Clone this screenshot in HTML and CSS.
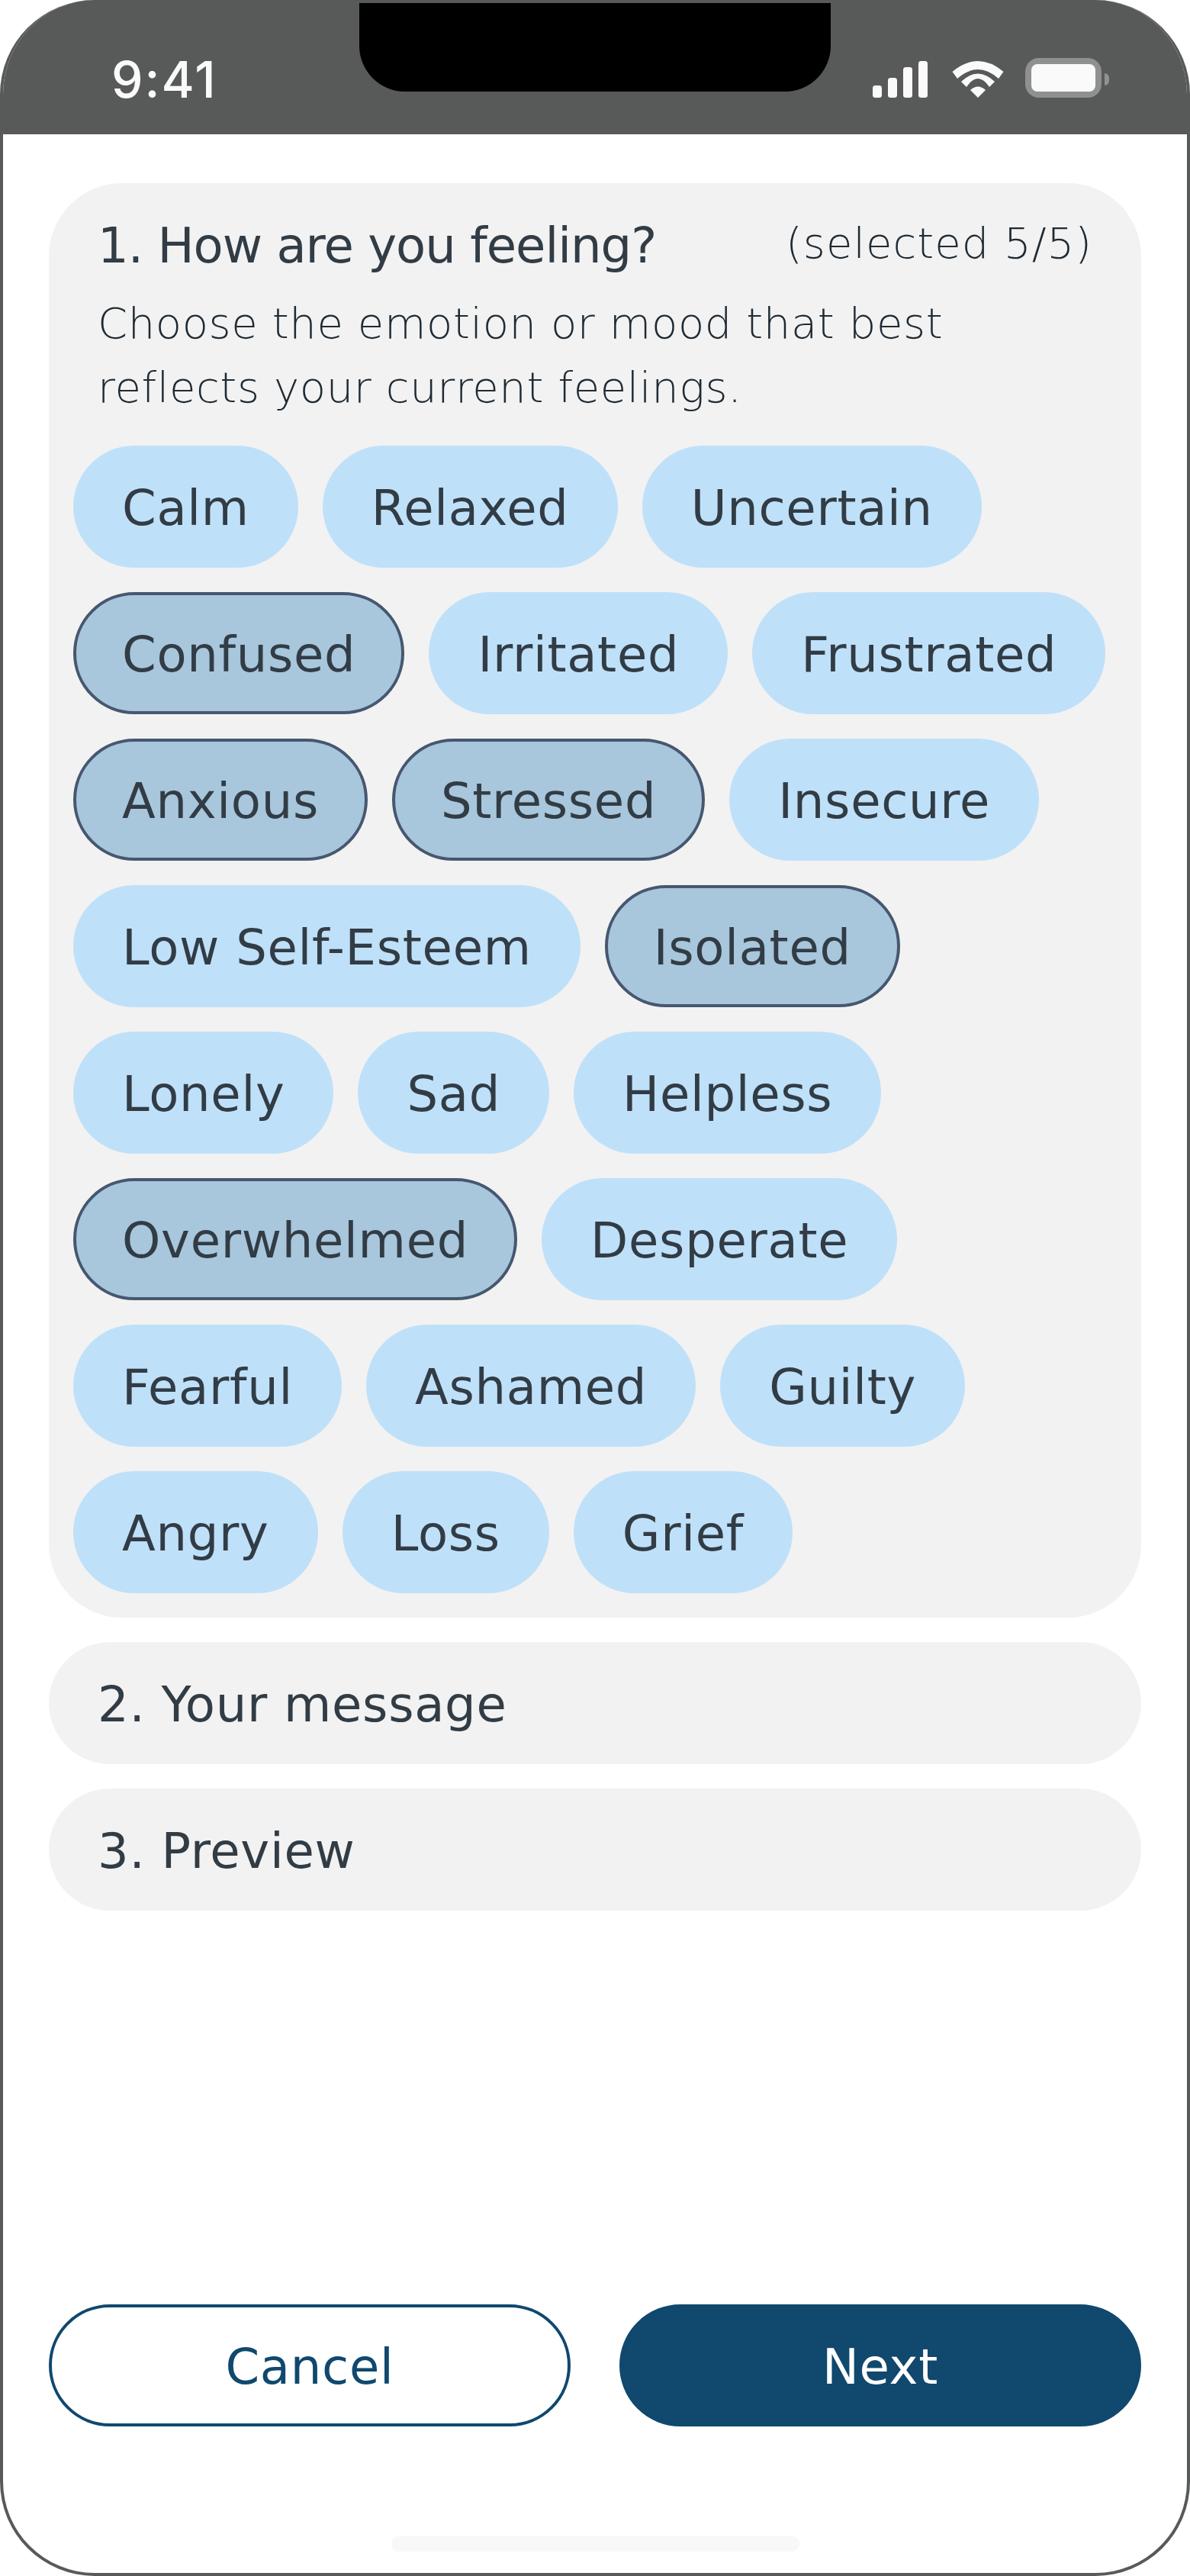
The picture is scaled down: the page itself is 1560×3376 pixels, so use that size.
FILE: index.html
```html
<!DOCTYPE html>
<html lang="en">
<head>
    <meta charset="UTF-8">
    <meta name="viewport" content="width=device-width, initial-scale=1.0">
    <title>How are you feeling</title>
    <link rel="stylesheet" href="styles.css">
</head>
<body>
    <div class="phone">
        <div class="status">
            <div class="time">9:41</div>
            <div class="notch"></div>
            <div class="status-icons">
                <svg class="signal" width="72" height="48" viewBox="0 0 72 48">
                    <rect x="0" y="32" width="12" height="16" rx="3.5"/>
                    <rect x="20" y="22" width="12" height="26" rx="3.5"/>
                    <rect x="40" y="8" width="12" height="40" rx="3.5"/>
                    <rect x="60" y="0" width="12" height="48" rx="3.5"/>
                </svg>
                <svg class="wifi" width="68" height="48" viewBox="0 0 68 48">
                    <path d="M0.5 14 Q34 -14 67.5 14 L61 23 Q34 -1 7 23Z"/>
                    <path d="M12 27 Q34 6 56 27 L49 34 Q34 12 19 34Z"/>
                    <path d="M24 38 Q34 29 44 38 L34 48Z"/>
                </svg>
                <div class="battery"><div class="battery-fill"></div></div>
                <div class="battery-nub"></div>
            </div>
        </div>

        <div class="content">
            <div class="section open">
                <div class="section-head">
                    <span class="section-title">1. How are you feeling?</span>
                    <span class="count">(selected 5/5)</span>
                </div>
                <p class="desc">Choose the emotion or mood that best<br>reflects your current feelings.</p>
                <div class="chips">
                    <div class="chip-row">
                        <span class="chip">Calm</span>
                        <span class="chip">Relaxed</span>
                        <span class="chip">Uncertain</span>
                    </div>
                    <div class="chip-row">
                        <span class="chip selected">Confused</span>
                        <span class="chip">Irritated</span>
                        <span class="chip">Frustrated</span>
                    </div>
                    <div class="chip-row">
                        <span class="chip selected">Anxious</span>
                        <span class="chip selected">Stressed</span>
                        <span class="chip">Insecure</span>
                    </div>
                    <div class="chip-row">
                        <span class="chip">Low Self-Esteem</span>
                        <span class="chip selected">Isolated</span>
                    </div>
                    <div class="chip-row">
                        <span class="chip">Lonely</span>
                        <span class="chip">Sad</span>
                        <span class="chip">Helpless</span>
                    </div>
                    <div class="chip-row">
                        <span class="chip selected">Overwhelmed</span>
                        <span class="chip">Desperate</span>
                    </div>
                    <div class="chip-row">
                        <span class="chip">Fearful</span>
                        <span class="chip">Ashamed</span>
                        <span class="chip">Guilty</span>
                    </div>
                    <div class="chip-row">
                        <span class="chip">Angry</span>
                        <span class="chip">Loss</span>
                        <span class="chip">Grief</span>
                    </div>
                </div>
            </div>
            <div class="section closed"><span class="section-title">2. Your message</span></div>
            <div class="section closed"><span class="section-title">3. Preview</span></div>

            <div class="actions">
                <button class="btn btn-outline">Cancel</button>
                <button class="btn btn-solid">Next</button>
            </div>
        </div>
        <div class="home-bar"></div>
    </div>
</body>
</html>
```

FILE: styles.css
```css
*{
    box-sizing: border-box;
}
html,body{
    margin: 0;
    background-color: #fff;
}
body{
    font-family: "DejaVu Sans", "Inter", sans-serif;
    color: #323c45;
}
.phone{
    width: 1560px;
    height: 3376px;
    border: 4px solid #585a59;
    border-top: 0;
    border-radius: 124px;
    overflow: hidden;
    display: flex;
    flex-direction: column;
    background-color: #fff;
}
.status{
    height: 176px;
    flex-shrink: 0;
    background-color: #585a59;
    display: flex;
    align-items: flex-start;
    padding-left: 142px;
}
.time{
    width: 325px;
    margin-top: 70px;
    font-family: "Inter", sans-serif;
    font-size: 66px;
    line-height: 68px;
    font-weight: 500;
    letter-spacing: 2px;
    color: #fafafa;
}
.notch{
    width: 618px;
    height: 116px;
    margin-top: 4px;
    background-color: #000;
    border-radius: 0 0 60px 60px;
}
.status-icons{
    margin-left: 55px;
    margin-top: 76px;
    display: flex;
    align-items: flex-end;
}
.signal,.wifi{
    fill: #fafafa;
    display: block;
}
.wifi{
    margin-left: 32px;
}
.battery{
    margin-left: 28px;
    width: 100px;
    height: 52px;
    padding: 8px;
    background-color: #8f918f;
    border-radius: 18px;
}
.battery-fill{
    height: 36px;
    background-color: #fafafa;
    border-radius: 8px;
}
.battery-nub{
    width: 6px;
    height: 16px;
    margin: 0 0 16px 4px;
    background-color: #8f918f;
    border-radius: 0 8px 8px 0;
}
.content{
    flex: 1;
    display: flex;
    flex-direction: column;
    gap: 32px;
    padding: 64px 60px 0;
}
.section{
    background-color: #f2f2f2;
    border-radius: 96px;
}
.open{
    padding: 32px;
}
.closed{
    height: 160px;
    padding: 4px 64px 0;
    display: flex;
    align-items: center;
}
.section-head{
    display: flex;
    justify-content: space-between;
    align-items: center;
    padding: 4px 32px 0;
    height: 96px;
}
.section-title{
    font-size: 64px;
    line-height: 96px;
    letter-spacing: 0.7px;
}
.section-head .section-title{
    letter-spacing: -1px;
}
.count{
    font-size: 56px;
    font-weight: 200;
    letter-spacing: 1px;
    color: #1f2a33;
    margin-top: -8px;
}
.desc{
    margin: 14px 0 34px;
    padding: 0 32px;
    font-size: 56px;
    line-height: 84px;
    font-weight: 200;
    letter-spacing: 0.6px;
    color: #1f2a33;
}
.chips{
    display: flex;
    flex-direction: column;
    gap: 32px;
}
.chip-row{
    display: flex;
    gap: 32px;
}
.chip{
    height: 160px;
    padding: 4px 64px 0;
    display: flex;
    align-items: center;
    font-size: 64px;
    letter-spacing: 0.7px;
    background-color: #bfe0f9;
    border-radius: 80px;
}
.selected{
    background-color: #a8c6dc;
    border: 4px solid #46576f;
    padding: 4px 60px 0;
}
.actions{
    margin-top: auto;
    margin-bottom: 144px;
    display: flex;
    gap: 64px;
}
.btn{
    flex: 1;
    height: 160px;
    padding: 4px 0 0;
    font-family: inherit;
    font-size: 64px;
    letter-spacing: 0.7px;
    border-radius: 80px;
    border: 4px solid #10486e;
}
.btn-outline{
    background-color: #fff;
    color: #10486e;
}
.btn-solid{
    background-color: #10486e;
    color: #fff;
}
.home-bar{
    flex-shrink: 0;
    width: 535px;
    height: 20px;
    margin: 0 auto 28px;
    background-color: #f8f8f8;
    border-radius: 10px;
}
```
